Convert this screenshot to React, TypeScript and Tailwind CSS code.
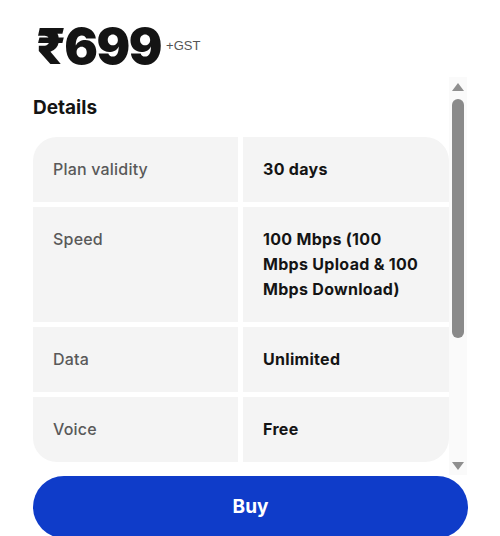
import React from "react";

const rows = [
  { label: "Plan validity", value: "30 days" },
  { label: "Speed", value: "100 Mbps (100 Mbps Upload & 100 Mbps Download)" },
  { label: "Data", value: "Unlimited" },
  { label: "Voice", value: "Free" },
];

function Scrollbar() {
  return (
    <div className="flex h-full w-[18px] flex-col items-center bg-[#fafafa] px-[3px] pt-[6px] pb-[5px]">
      <svg width="12" height="8" viewBox="0 0 12 8" className="shrink-0">
        <path d="M6 0 L12 8 L0 8 Z" fill="#8f8f8f" />
      </svg>
      <div className="mt-[8px] h-[239px] w-[12px] shrink-0 rounded-full bg-[#8a8a8a]" />
      <div className="flex-1" />
      <svg width="12" height="8" viewBox="0 0 12 8" className="shrink-0">
        <path d="M0 0 L12 0 L6 8 Z" fill="#8f8f8f" />
      </svg>
    </div>
  );
}

export default function App() {
  return (
    <div
      className="h-[536px] w-[500px] overflow-hidden bg-white pl-[33px] pr-[32px] pt-[21px]"
      style={{ fontFamily: "Inter, 'Noto Sans', sans-serif" }}
    >
      {/* PRICE */}
      <div className="flex items-start">
        <span className="pl-[3px] text-[50px] leading-[50px] font-black tracking-[-1.5px] text-[#141414]">
          ₹699
        </span>
        <span
          className="ml-[5px] mt-[17px] text-[13px] leading-[15px] text-[#555]"
          style={{ fontFamily: "'Liberation Sans', Arial, sans-serif" }}
        >
          +GST
        </span>
      </div>

      {/* DETAILS */}
      <div className="mt-[6px] flex h-[398px] w-[434px]">
        <div className="w-[416px] overflow-hidden">
          <h3 className="pt-[19px] text-[19px] leading-[24px] font-bold text-[#141414]">Details</h3>
          <div className="mt-[17px] grid grid-cols-[205px_206px] gap-[5px]">
            {rows.map((r, i) => {
              const first = i === 0;
              const last = i === rows.length - 1;
              return (
                <React.Fragment key={r.label}>
                  <div
                    className={`bg-[#f4f4f4] px-5 py-5 text-[16px] leading-[25px] font-medium tracking-[0.2px] text-[#595959] ${
                      first ? "rounded-tl-[24px]" : ""
                    } ${last ? "rounded-bl-[24px]" : ""}`}
                  >
                    {r.label}
                  </div>
                  <div
                    className={`bg-[#f4f4f4] py-5 pl-5 pr-[20px] text-[16px] leading-[25px] font-bold tracking-[0.3px] text-[#141414] ${
                      first ? "rounded-tr-[24px]" : ""
                    } ${last ? "rounded-br-[24px]" : ""}`}
                  >
                    {r.value}
                  </div>
                </React.Fragment>
              );
            })}
          </div>
        </div>
        <div className="ml-auto">
          <Scrollbar />
        </div>
      </div>

      {/* BUY */}
      <button className="mt-[1px] flex h-[62px] w-[435px] items-center justify-center rounded-full bg-[#0f3cc9] pt-[1px] text-[19px] font-bold text-white">
        Buy
      </button>
    </div>
  );
}
